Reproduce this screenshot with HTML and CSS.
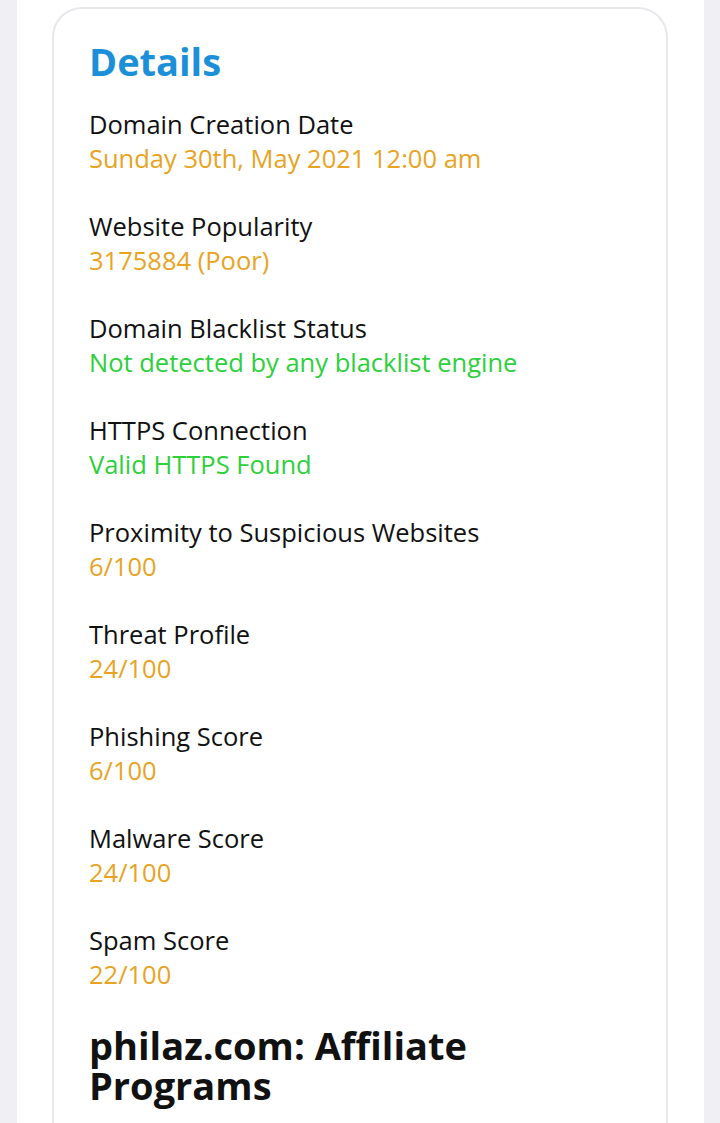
FILE: index.html
```html
<!DOCTYPE html>
<html>
<head>
<meta charset="utf-8">
<link rel="stylesheet" href="styles.css">
</head>
<body>
<div class="page">
  <section class="card">
    <h2 class="card-title">Details</h2>
    <dl class="details">
      <div class="item"><dt>Domain Creation Date</dt><dd class="warn">Sunday 30th, May 2021 12:00 am</dd></div>
      <div class="item"><dt>Website Popularity</dt><dd class="warn">3175884 (Poor)</dd></div>
      <div class="item"><dt>Domain Blacklist Status</dt><dd class="ok">Not detected by any blacklist engine</dd></div>
      <div class="item"><dt>HTTPS Connection</dt><dd class="ok">Valid HTTPS Found</dd></div>
      <div class="item"><dt>Proximity to Suspicious Websites</dt><dd class="warn">6/100</dd></div>
      <div class="item"><dt>Threat Profile</dt><dd class="warn">24/100</dd></div>
      <div class="item"><dt>Phishing Score</dt><dd class="warn">6/100</dd></div>
      <div class="item"><dt>Malware Score</dt><dd class="warn">24/100</dd></div>
      <div class="item"><dt>Spam Score</dt><dd class="warn">22/100</dd></div>
    </dl>
    <h2 class="section-title">philaz.com: Affiliate Programs</h2>
  </section>
</div>
</body>
</html>
```
FILE: styles.css
```css
html, body {
  margin: 0;
  padding: 0;
  background: #efeff4;
  font-family: "Open Sans", "Liberation Sans", sans-serif;
}
.page {
  margin: 0 16px 0 17px;
  background: #ffffff;
  height: 1123px;
  padding-top: 7px;
  box-sizing: border-box;
  overflow: hidden;
}
.card {
  margin-left: 35px;
  width: 616px;
  box-sizing: border-box;
  border: 2px solid #e8e8ec;
  border-radius: 30px;
  padding: 27px 35px 40px;
  min-height: 1200px;
}
.card-title {
  margin: 0 0 21px;
  font-size: 38px;
  line-height: 50px;
  font-weight: 700;
  color: #1b8fd8;
}
.details {
  margin: 0;
}
.item {
  margin-bottom: 34px;
}
.item dt, .item dd {
  margin: 0;
  font-size: 25.5px;
  line-height: 34px;
}
.item dt {
  color: #111111;
}
.warn { color: #e8a323; }
.ok { color: #2dcf3b; }
.section-title {
  margin: 0;
  font-size: 38px;
  line-height: 40px;
  font-weight: 700;
  color: #111111;
}
```
